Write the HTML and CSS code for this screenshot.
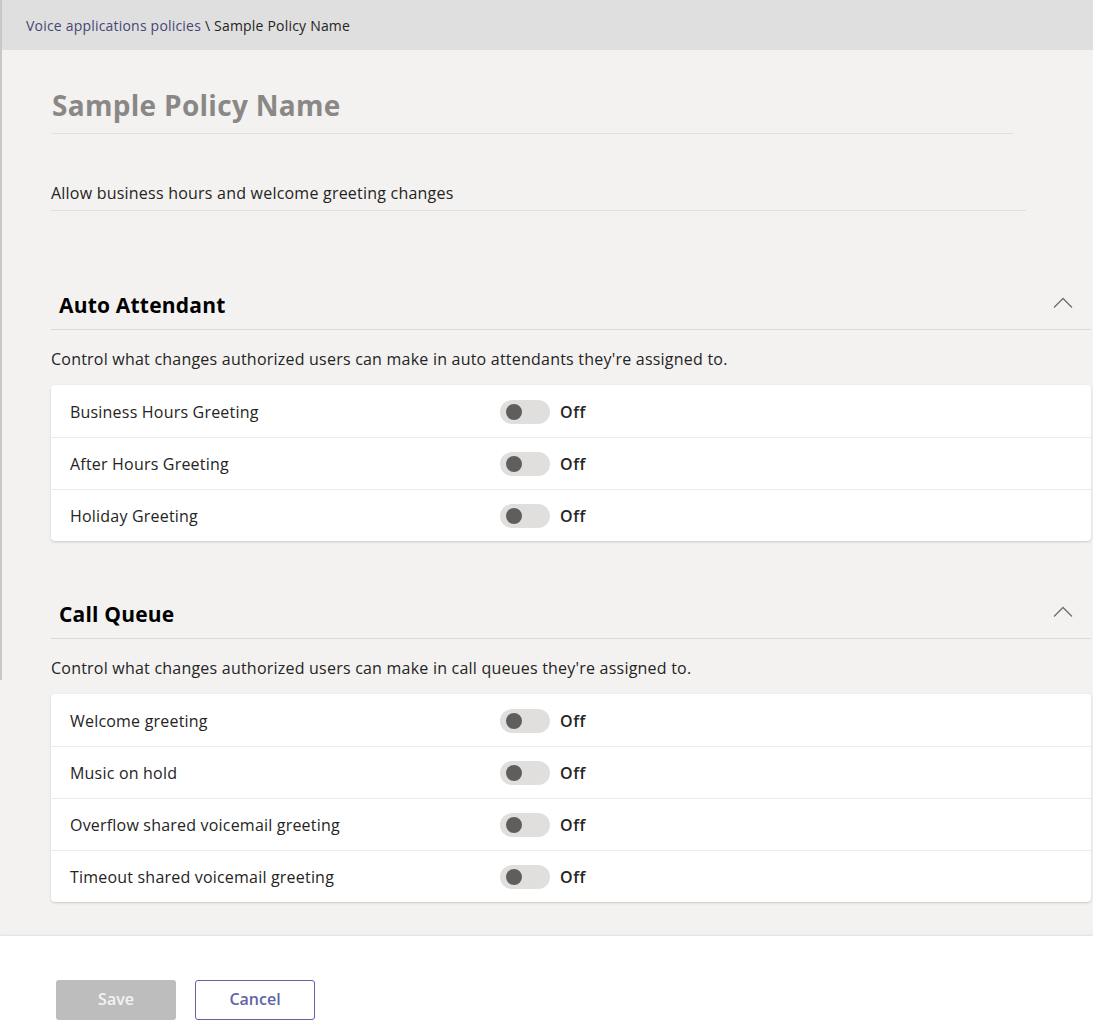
FILE: index.html
```html
<!DOCTYPE html>
<html lang="en">
<head>
<meta charset="utf-8">
<title>Sample Policy Name</title>
<link rel="stylesheet" href="styles.css">
</head>
<body>
<div class="page">
  <header class="topbar">
    <span class="crumb-link">Voice applications policies</span><span class="crumb-sep"> \ </span><span class="crumb-current">Sample Policy Name</span>
  </header>
  <main class="content">
    <div class="field title-field">Sample Policy Name</div>
    <div class="field desc-field">Allow business hours and welcome greeting changes</div>

    <section class="section first">
      <div class="section-head">
        <h2 class="section-title">Auto Attendant</h2>
        <svg class="chevron" width="20" height="12" viewBox="0 0 20 12"><path d="M1 10.5 L10 1.5 L19 10.5" fill="none" stroke="#6e6e6e" stroke-width="1.3"/></svg>
      </div>
      <p class="section-desc">Control what changes authorized users can make in auto attendants they're assigned to.</p>
      <div class="card">
        <div class="row"><span class="label">Business Hours Greeting</span><span class="toggle"><span class="knob"></span></span><span class="state">Off</span></div>
        <div class="row"><span class="label">After Hours Greeting</span><span class="toggle"><span class="knob"></span></span><span class="state">Off</span></div>
        <div class="row"><span class="label">Holiday Greeting</span><span class="toggle"><span class="knob"></span></span><span class="state">Off</span></div>
      </div>
    </section>

    <section class="section">
      <div class="section-head">
        <h2 class="section-title">Call Queue</h2>
        <svg class="chevron" width="20" height="12" viewBox="0 0 20 12"><path d="M1 10.5 L10 1.5 L19 10.5" fill="none" stroke="#6e6e6e" stroke-width="1.3"/></svg>
      </div>
      <p class="section-desc">Control what changes authorized users can make in call queues they're assigned to.</p>
      <div class="card">
        <div class="row"><span class="label">Welcome greeting</span><span class="toggle"><span class="knob"></span></span><span class="state">Off</span></div>
        <div class="row"><span class="label">Music on hold</span><span class="toggle"><span class="knob"></span></span><span class="state">Off</span></div>
        <div class="row"><span class="label">Overflow shared voicemail greeting</span><span class="toggle"><span class="knob"></span></span><span class="state">Off</span></div>
        <div class="row"><span class="label">Timeout shared voicemail greeting</span><span class="toggle"><span class="knob"></span></span><span class="state">Off</span></div>
      </div>
    </section>
  </main>
  <footer class="footer">
    <button class="btn btn-save" type="button">Save</button>
    <button class="btn btn-cancel" type="button">Cancel</button>
  </footer>
</div>
</body>
</html>
```
FILE: styles.css
```css
* { box-sizing: border-box; }
html, body { margin: 0; padding: 0; }
body {
  font-family: "Open Sans", "Noto Sans", sans-serif;
  color: #252423;
  background: #ffffff;
}
.page {
  position: relative;
  width: 1093px;
  height: 1032px;
  overflow: hidden;
  display: flex;
  flex-direction: column;
}
.page::before {
  content: "";
  position: absolute;
  left: 0;
  top: 0;
  width: 2px;
  height: 680px;
  background: #c8c8c8;
}
.topbar {
  height: 50px;
  flex: none;
  background: #dfdfdf;
  padding: 16px 0 0 26px;
  font-size: 14px;
  line-height: 20px;
  letter-spacing: 0.2px;
}
.crumb-link { color: #464775; }
.crumb-sep, .crumb-current { color: #252423; }
.content {
  flex: none;
  height: 886px;
  background: #f3f2f1;
  padding: 0 2px 0 51px;
}
.field {
  border-bottom: 1px solid #e1dfdd;
}
.title-field {
  width: 961px;
  margin-left: 1px;
  padding-top: 36px;
  height: 84px;
  font-size: 28px;
  line-height: 38px;
  font-weight: 700;
  color: #8a8886;
  letter-spacing: 0.3px;
}
.desc-field {
  width: 975px;
  margin-top: 47px;
  height: 30px;
  font-size: 16px;
  line-height: 20px;
  letter-spacing: 0.22px;
  padding-top: 2px;
}
.section.first { margin-top: 74px; }
.section { margin-top: 53px; }
.section-head {
  display: flex;
  align-items: center;
  justify-content: space-between;
  height: 45px;
  border-bottom: 1px solid #dcdad8;
  padding: 0 18px 4px 8px;
}
.section-title {
  margin: 0;
  font-size: 21px;
  line-height: 28px;
  font-weight: 700;
  color: #000;
  letter-spacing: 0.2px;
}
.chevron { margin-top: -4px; }
.section-desc {
  margin: 0;
  padding-top: 19px;
  height: 55px;
  font-size: 16px;
  line-height: 20px;
  letter-spacing: 0.22px;
}
.card {
  background: #fff;
  border-radius: 4px;
  box-shadow: 0 1px 3px rgba(0,0,0,0.12), 0 1px 1px rgba(0,0,0,0.05);
}
.row {
  display: flex;
  align-items: center;
  height: 52px;
  padding-left: 19px;
  padding-top: 1px;
  border-top: 1px solid #edebe9;
}
.row:first-child { border-top: none; padding-top: 2px; }
.label {
  width: 430px;
  font-size: 16px;
  line-height: 20px;
  letter-spacing: 0.2px;
}
.toggle {
  width: 50px;
  height: 24px;
  border-radius: 12px;
  background: #e1dfdd;
  display: flex;
  align-items: center;
  padding-left: 6px;
}
.knob {
  width: 16px;
  height: 16px;
  border-radius: 50%;
  background: #605e5c;
}
.state {
  margin-left: 10px;
  font-size: 16px;
  font-weight: 600;
  letter-spacing: 0.6px;
}
.footer {
  flex: 1;
  background: #fff;
  box-shadow: 0 -1px 2px rgba(0,0,0,0.08);
  display: flex;
  gap: 19px;
  padding: 44px 0 0 56px;
  position: relative;
}
.btn {
  width: 120px;
  height: 40px;
  border-radius: 3px;
  font-family: inherit;
  font-size: 16px;
  font-weight: 600;
  letter-spacing: 0;
  cursor: pointer;
  padding: 0 0 2px;
}
.btn-save {
  background: #bdbdbd;
  border: none;
  color: #f3f3f3;
}
.btn-cancel {
  background: #fff;
  border: 1px solid #6264a7;
  color: #6264a7;
}
```
